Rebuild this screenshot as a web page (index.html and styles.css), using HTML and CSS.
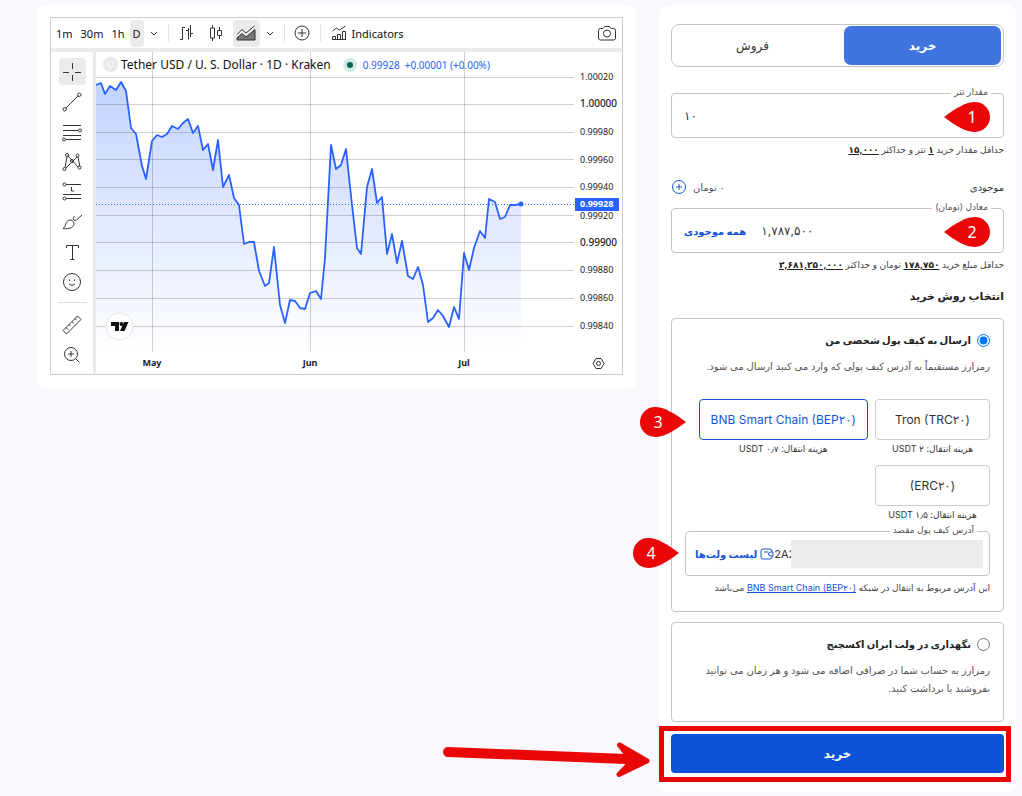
FILE: index.html
```html
<!DOCTYPE html>
<html lang="fa">
<head>
    <meta charset="UTF-8">
    <meta name="viewport" content="width=device-width, initial-scale=1">
    <title>خرید تتر</title>
    <link rel="stylesheet" href="styles.css">
</head>
<body>
    <main class="page">
        <section class="chart-card" lang="en">
            <div class="widget">
                <div class="toolbar">
                    <button class="interval" type="button">1m</button>
                    <button class="interval" type="button">30m</button>
                    <button class="interval" type="button">1h</button>
                    <button class="interval active" type="button">D</button>
                    <button class="arrow" type="button" aria-label="Intervals"><svg width="8" height="5" viewBox="0 0 8 5"><path d="M1 1l3 3 3-3"/></svg></button>
                    <span class="divider"></span>
                    <button class="tool-top" type="button" aria-label="Bars"><svg width="14" height="16" viewBox="0 0 14 16"><path d="M1 14.500h2.500v-12H6M9.500 3v11.500M9.500 5.500H7M11.500 0v12M11.500 8.500H14"/></svg></button>
                    <button class="tool-top" type="button" aria-label="Candles"><svg width="14" height="16" viewBox="0 0 14 16"><path d="M1.500 3h4v10h-4zM3.500 0v3M3.500 13v3M8.500 5.500h4v5h-4zM10.500 2v3.500M10.500 10.500v3.500"/></svg></button>
                    <button class="tool-top active" type="button" aria-label="Area"><svg width="20" height="16" viewBox="0 0 20 16"><path d="M1 9.500l5-5 4 3.500L18.500 1"/><path class="solid" d="M1 15v-2l5-4.500 4 3.500 9-7.500V15z"/></svg></button>
                    <button class="arrow" type="button" aria-label="Chart types"><svg width="8" height="5" viewBox="0 0 8 5"><path d="M1 1l3 3 3-3"/></svg></button>
                    <span class="divider"></span>
                    <button class="tool-top compare" type="button" aria-label="Compare"><svg width="16" height="16" viewBox="0 0 16 16"><circle cx="8" cy="8" r="7"/><path d="M8 4v8M4 8h8"/></svg></button>
                    <span class="divider"></span>
                    <button class="indicators" type="button"><svg width="16" height="16" viewBox="0 0 16 16"><path d="M1.500 6l4-3 3 2 6-4M1.500 14.500v-3h3v3zM6.500 14.500v-5h3v5zM11.500 14.500v-8h3v8zM1 14.500h14"/></svg>Indicators</button>
                    <button class="camera" type="button" aria-label="Snapshot"><svg width="18" height="15" viewBox="0 0 18 15"><path d="M2.500 2.500H5l1.500-2h5l1.500 2h2.500q2 0 2 2v7.500q0 2-2 2h-13q-2 0-2-2V4.500q0-2 2-2z"/><circle cx="9" cy="7.500" r="3.500"/></svg></button>
                </div>
                <div class="widget-body">
                    <div class="side-tools">
                        <button class="active" type="button" aria-label="Cross"><svg width="20" height="20" viewBox="0 0 20 20"><path d="M10.500 1v6M10.500 13v6M1 10.500h6M13 10.500h6"/></svg></button>
                        <button type="button" aria-label="Trend line"><svg width="20" height="20" viewBox="0 0 20 20"><path d="M4 16L16 4"/><circle cx="2.700" cy="17.300" r="1.700"/><circle cx="17.300" cy="2.700" r="1.700"/></svg></button>
                        <button type="button" aria-label="Fib retracement"><svg width="20" height="20" viewBox="0 0 20 20"><path d="M1 3.500h18M1 8.500h15M1 13.500h18M4 17.500h15"/><circle cx="18" cy="8.500" r="1.500"/><circle cx="2" cy="17.500" r="1.500"/></svg></button>
                        <button type="button" aria-label="Pattern"><svg width="20" height="20" viewBox="0 0 20 20"><path d="M5 4.500L3 15.500M4 16L15 5M16 5l2 10M6 4l10 11"/><circle cx="5" cy="3" r="1.500"/><circle cx="15.500" cy="3.500" r="1.500"/><circle cx="2.500" cy="17" r="1.500"/><circle cx="17.500" cy="15.500" r="1.500"/><circle cx="10" cy="9" r="1.500"/></svg></button>
                        <button type="button" aria-label="Long position"><svg width="20" height="20" viewBox="0 0 20 20"><path d="M4 2.500h15M9.500 5v4H12M1 12.500h18M4 16.500h15"/><circle cx="2.500" cy="2.500" r="1.500"/><circle cx="2.500" cy="16.500" r="1.500"/></svg></button>
                        <button type="button" aria-label="Brush"><svg width="20" height="20" viewBox="0 0 20 20"><path d="M1 16.500c3-1 2-8 7-8.500 3 0 5 3 3.500 5.500-2 3.500-7 3.500-10.500 3zM11.500 8c-.5-2 0-3 1-4M12 8.500l2.500-.5L20 3"/></svg></button>
                        <button type="button" aria-label="Text"><svg width="20" height="20" viewBox="0 0 20 20"><path d="M4.500 6V3.500h12V6M10.500 3.500v14M8.500 17.500h4"/></svg></button>
                        <button type="button" aria-label="Emoji"><svg width="20" height="20" viewBox="0 0 20 20"><circle cx="10" cy="10" r="8.500"/><path d="M7.500 7.500v1.500M12.500 7.500v1.500M7 12q3 3 6 0"/></svg></button>
                        <span class="rule"></span>
                        <button type="button" aria-label="Measure"><svg width="20" height="20" viewBox="0 0 20 20"><path d="M1 15.500L15.500 1 19 4.500 4.500 19zM4 12.500l2 2M7 9.500l1.500 1.500M10 6.500l2 2M13 3.500L14.500 5"/></svg></button>
                        <button type="button" aria-label="Zoom in"><svg width="20" height="20" viewBox="0 0 20 20"><circle cx="9" cy="9" r="6.500"/><path d="M9 6v6M6 9h6M14 14l3.500 3.500"/></svg></button>
                    </div>
                    <div class="plot">
                        <div class="legend">
                            <span class="coin">U</span>
                            <span class="symbol">Tether USD / U. S. Dollar · 1D · Kraken</span>
                            <span class="status"></span>
                            <span class="quote">0.99928</span>
                            <span class="quote">+0.00001 (+0.00%)</span>
                        </div>
                        <svg class="graph" viewBox="0 0 526 322" role="img" aria-label="Tether USD chart">
                            <defs>
                                <linearGradient id="fade" x1="0" y1="30" x2="0" y2="300" gradientUnits="userSpaceOnUse">
                                    <stop offset="0" stop-color="#2962ff" stop-opacity=".28"/>
                                    <stop offset="1" stop-color="#2962ff" stop-opacity="0"/>
                                </linearGradient>
                            </defs>
                            <path class="area" d="M0 33L5 31 9 42 14 34 20 38 25 30 30 39 35 76 40 82 46 114 50 127 56 89 61 83 66 85 71 82 76 74 82 77 87 71 92 67 97 81 102 74 107 98 112 92 117 118 122 88 127 135 133 123 138 146 143 153 148 192 153 190 158 190 163 219 169 234 173 231 178 195 184 253 189 271 194 248 199 249 204 256 209 257 214 241 220 239 225 247 229 206 235 93 240 117 245 113 250 97 256 153 261 196 265 202 271 135 276 117 281 151 286 145 291 202 296 182 301 211 306 189 312 224 317 227 322 215 327 233 332 270 337 266 342 258 347 264 353 275 358 255 363 267 368 201 373 218 378 196 384 179 389 186 393 147 399 150 404 167 409 165 414 153 419 153 425 152V300H0z"/>
                            <path class="grid" d="M0 25.500h478M0 52.500h478M0 80.500h478M0 107.500h478M0 135.500h478M0 163.500h478M0 190.500h478M0 218.500h478M0 246.500h478M0 274.500h478M56.500 0v300M214.500 0v300M368.500 0v300"/>
                            <path class="last" d="M0 152.500h478"/>
                            <path class="line" d="M0 33L5 31 9 42 14 34 20 38 25 30 30 39 35 76 40 82 46 114 50 127 56 89 61 83 66 85 71 82 76 74 82 77 87 71 92 67 97 81 102 74 107 98 112 92 117 118 122 88 127 135 133 123 138 146 143 153 148 192 153 190 158 190 163 219 169 234 173 231 178 195 184 253 189 271 194 248 199 249 204 256 209 257 214 241 220 239 225 247 229 206 235 93 240 117 245 113 250 97 256 153 261 196 265 202 271 135 276 117 281 151 286 145 291 202 296 182 301 211 306 189 312 224 317 227 322 215 327 233 332 270 337 266 342 258 347 264 353 275 358 255 363 267 368 201 373 218 378 196 384 179 389 186 393 147 399 150 404 167 409 165 414 153 419 153 425 152"/>
                            <circle class="dot" cx="425" cy="152" r="2.500"/>
                            <g class="axis">
                                <text x="484" y="28">1.00020</text>
                                <text class="strong" x="484" y="55">1.00000</text>
                                <text x="484" y="83">0.99980</text>
                                <text x="484" y="111">0.99960</text>
                                <text x="484" y="138">0.99940</text>
                                <text x="484" y="167">0.99920</text>
                                <text class="strong" x="484" y="194">0.99900</text>
                                <text x="484" y="221">0.99880</text>
                                <text x="484" y="249">0.99860</text>
                                <text x="484" y="277">0.99840</text>
                                <rect x="479" y="146" width="44" height="13"/>
                                <text class="now" x="484" y="155">0.99928</text>
                                <text class="month" x="56" y="314">May</text>
                                <text class="month" x="214" y="314">Jun</text>
                                <text class="month" x="368" y="314">Jul</text>
                            </g>
                            <g class="gear"><path d="M497 311.500l3-5h5l3 5-3 5h-5z"/><circle cx="502.500" cy="311.500" r="2"/></g>
                            <circle class="logo-back" cx="23.500" cy="274.500" r="13.500"/>
                            <path class="logo" d="M15 270h8v9h-4v-5h-4zM28 270h4.500l-4 9H24z"/>
                            <circle class="logo" cx="25.500" cy="272" r="2"/>
                        </svg>
                    </div>
                </div>
            </div>
        </section>

        <form class="trade" dir="rtl">
            <div class="tabs">
                <button class="tab selected" type="button">خرید</button>
                <button class="tab" type="button">فروش</button>
            </div>

            <div class="field">
                <label for="amount">مقدار تتر</label>
                <input type="text" id="amount" value="۱۰">
                <svg class="pin pin-inside" width="46" height="30" viewBox="0 0 46 30"><path d="M0 15C12 6 22 0 31 0a15 15 0 0 1 0 30C22 30 12 24 0 15z"/><text x="28" y="21">1</text></svg>
            </div>
            <p class="hint">حداقل مقدار خرید <b>۱</b> تتر و حداکثر <b>۱۵,۰۰۰</b></p>

            <div class="balance">
                <span>موجودی</span>
                <span class="cash">۰ تومان</span>
                <button type="button" aria-label="افزایش موجودی"><svg width="16" height="16" viewBox="0 0 16 16"><circle cx="8" cy="8" r="6.500"/><path d="M8 5v6M5 8h6"/></svg></button>
            </div>

            <div class="field">
                <label for="total">معادل (تومان)</label>
                <input type="text" id="total" value="۱,۷۸۷,۵۰۰">
                <button class="link-button" type="button">همه موجودی</button>
                <svg class="pin pin-inside" width="46" height="30" viewBox="0 0 46 30"><path d="M0 15C12 6 22 0 31 0a15 15 0 0 1 0 30C22 30 12 24 0 15z"/><text x="28" y="21">2</text></svg>
            </div>
            <p class="hint">حداقل مبلغ خرید <b>۱۷۸,۷۵۰</b> تومان و حداکثر <b>۲,۶۸۱,۲۵۰,۰۰۰</b></p>

            <h2>انتخاب روش خرید</h2>

            <div class="method">
                <div class="choice">
                    <input type="radio" id="own" name="method" checked>
                    <label for="own">ارسال به کیف پول شخصی من</label>
                </div>
                <p class="note">رمزارز مستقیماً به آدرس کیف پولی که وارد می کنید ارسال می شود.</p>
                <div class="networks">
                    <div class="network">
                        <button type="button" dir="ltr">Tron (TRC۲۰)</button>
                        <span>هزینه انتقال: ۲ USDT</span>
                    </div>
                    <div class="network picked">
                        <button type="button" dir="ltr">BNB Smart Chain (BEP۲۰)</button>
                        <span>هزینه انتقال: ۰٫۷ USDT</span>
                        <svg class="pin pin-network" width="46" height="30" viewBox="0 0 46 30"><path d="M46 15C34 6 24 0 15 0a15 15 0 0 0 0 30c9 0 19-6 31-15z"/><text x="18" y="21">3</text></svg>
                    </div>
                    <div class="network">
                        <button type="button" dir="ltr">(ERC۲۰)</button>
                        <span>هزینه انتقال: ۱٫۵ USDT</span>
                    </div>
                </div>
                <div class="field wallet">
                    <label for="address">آدرس کیف پول مقصد</label>
                    <span class="mask"></span>
                    <input type="text" id="address" value="2A2">
                    <button class="link-button" type="button"><svg width="14" height="12" viewBox="0 0 14 12"><path d="M3 1h7q2 0 2 2v1M12 8v1q0 2-2 2H3q-2 0-2-2V3q0-2 2-2M4 4h4M13 4h-2.500a2 2 0 0 0 0 4H13z"/></svg>لیست ولت‌ها</button>
                    <svg class="pin pin-wallet" width="46" height="30" viewBox="0 0 46 30"><path d="M46 15C34 6 24 0 15 0a15 15 0 0 0 0 30c9 0 19-6 31-15z"/><text x="18" y="21">4</text></svg>
                </div>
                <p class="hint">این آدرس مربوط به انتقال در شبکه <a href="#" dir="ltr">BNB Smart Chain (BEP۲۰)</a> می‌باشد</p>
            </div>

            <div class="method keep">
                <div class="choice">
                    <input type="radio" id="keep" name="method">
                    <label for="keep">نگهداری در ولت ایران اکسچنج</label>
                </div>
                <p class="note">رمزارز به حساب شما در صرافی اضافه می شود و هر زمان می توانید بفروشید یا برداشت کنید.</p>
            </div>

            <div class="submit">
                <button type="submit">خرید</button>
                <span class="frame"></span>
                <svg class="pointer" width="210" height="40" viewBox="0 0 210 40"><path class="shaft" d="M6 12L184 19"/><path class="head" d="M177.500 5L205 21 177 34.500 190 21z"/></svg>
            </div>
        </form>
    </main>
</body>
</html>
```
FILE: styles.css
```css
* { padding: 0; margin: 0; box-sizing: border-box; }
body {
    background: #faf8fc;
    font-family: "Inter", "DejaVu Sans", sans-serif;
    font-size: 11px;
    color: #333;
}
button, input {
    font: inherit;
    color: inherit;
    background: none;
    border: none;
}
button { cursor: pointer; }
svg {
    fill: none;
    stroke: #333;
    stroke-width: 1;
    display: block;
}
.page {
    display: flex;
    align-items: flex-start;
    gap: 23px;
    padding: 5px 6px 4px 37px;
}

/* chart */
.chart-card {
    flex: 1;
    min-width: 0;
    background: #fff;
    border-radius: 8px;
    padding: 12px 13px 14px;
    font-family: "Noto Sans", sans-serif;
}
.widget {
    border: 1px solid #ccc;
}
.toolbar {
    display: flex;
    align-items: center;
    height: 34px;
    padding: 0 6px 0 2px;
    border-bottom: 4px solid #ebebeb;
    color: #111;
}
.toolbar button {
    height: 27px;
    display: flex;
    align-items: center;
    justify-content: center;
    border-radius: 4px;
}
.toolbar .active, .side-tools .active {
    background: #ebebeb;
}
.toolbar .interval {
    padding: 0 3px;
    margin-right: 2px;
}
.toolbar .interval.active {
    margin-right: 0;
}
.toolbar .arrow {
    width: 20px;
}
.toolbar .divider {
    width: 1px;
    height: 18px;
    margin: 0 4px;
    background: #e4e4e4;
}
.toolbar .tool-top {
    width: 27px;
    margin-right: 3px;
}
.toolbar .tool-top.active, .toolbar .compare {
    margin-right: 0;
}
.tool-top .solid {
    fill: #777;
}
.toolbar .indicators {
    gap: 5px;
    padding: 0 6px;
}
.toolbar .camera {
    margin-left: auto;
}
.widget-body {
    display: flex;
}
.side-tools {
    display: flex;
    flex-direction: column;
    align-items: center;
    gap: 3px;
    width: 45px;
    padding: 6px 0;
    border-right: 3px solid #ebebeb;
}
.side-tools button {
    width: 27px;
    height: 27px;
    display: grid;
    place-items: center;
    border-radius: 4px;
}
.side-tools .rule {
    width: 29px;
    height: 1px;
    margin: 4px 0 5px;
    background: #ddd;
}
.plot {
    flex: 1;
    min-width: 0;
    position: relative;
}
.graph {
    width: 100%;
}
.legend {
    position: absolute;
    top: 4px;
    left: 7px;
    display: flex;
    align-items: center;
    white-space: nowrap;
}
.coin {
    width: 15px;
    height: 15px;
    margin-right: 3px;
    border-radius: 50%;
    background: #e8e8e8;
    color: #fff;
    font-size: 9px;
    line-height: 15px;
    text-align: center;
}
.symbol {
    font-size: 12px;
    color: #111;
}
.status {
    width: 14px;
    height: 14px;
    margin: 0 6px 0 12px;
    border-radius: 50%;
    background: #056656;
    border: 4px solid #d3ebe6;
}
.quote {
    margin-right: 5px;
    font-size: 10px;
    color: #2962ff;
}
.graph .area { fill: url(#fade); stroke: none; }
.graph .grid { stroke: #000; stroke-opacity: .18; }
.graph .last { stroke: #2962ff; stroke-dasharray: 1 2; }
.graph .line { stroke: #2962ff; stroke-width: 1.8; stroke-linejoin: round; }
.graph .dot { fill: #2962ff; stroke: none; }
.axis { stroke: none; fill: #222; font-size: 9px; }
.axis rect { fill: #2962ff; }
.axis .strong { font-size: 10px; font-weight: 500; }
.axis .now { fill: #fff; font-weight: bold; }
.axis .month { text-anchor: middle; font-weight: bold; }
.logo-back { fill: #fff; stroke: #e4e4e4; }
.logo { fill: #111; stroke: none; }

/* trade form */
.trade {
    width: 357px;
    background: #fff;
    border-radius: 8px;
    padding: 19px 12px;
}
.tabs {
    display: flex;
    justify-content: space-between;
    padding: 1px 2px;
    height: 43px;
    margin-bottom: 26px;
    border: 1px solid #c4c4d0;
    border-radius: 8px;
}
.tab {
    width: 48%;
    font-size: 12px;
}
.tab.selected {
    background: #4075e0;
    color: #fff;
    font-weight: bold;
    border-radius: 7px;
}
.field {
    position: relative;
    display: flex;
    align-items: center;
    height: 45px;
    padding: 0 12px;
    border: 1px solid #c4c4d0;
    border-radius: 4px;
}
.field label {
    position: absolute;
    top: -9px;
    right: 12px;
    padding: 0 3px;
    line-height: 14px;
    font-size: 9px;
    color: #555;
    background: #fff;
}
.field input {
    flex: 1;
    min-width: 0;
    direction: ltr;
    font-size: 12px;
    outline: none;
}
.link-button {
    display: flex;
    align-items: center;
    gap: 3px;
    color: #1554d8;
    font-size: 10px;
    font-weight: bold;
    white-space: nowrap;
}
.link-button svg {
    stroke: #1554d8;
}
.field #total {
    padding-left: 15px;
}
.hint {
    line-height: 24px;
    font-size: 9px;
    color: #444;
    white-space: nowrap;
}
.hint b {
    color: #222;
    text-decoration: underline;
}
.hint a {
    color: #1554d8;
    unicode-bidi: isolate;
}
.balance {
    display: flex;
    align-items: center;
    height: 24px;
    margin: 13px 0 9px;
    font-size: 10px;
}
.cash {
    margin-right: auto;
    color: #555;
}
.balance button {
    margin-right: 6px;
}
.balance svg {
    stroke: #1554d8;
}
.trade h2 {
    margin: 7px 0 10px;
    font-size: 11px;
    line-height: 24px;
    color: #222;
}
.method {
    min-height: 100px;
    padding: 9px 13px 11px;
    margin-bottom: 10px;
    border: 1px solid #c4c4d0;
    border-radius: 4px;
}
.choice {
    display: flex;
    align-items: center;
    gap: 6px;
    height: 24px;
    font-size: 10px;
    font-weight: bold;
    color: #222;
}
.choice input {
    width: 13px;
    height: 13px;
}
.note {
    margin-top: 5px;
    font-size: 10px;
    line-height: 18px;
    color: #555;
}
.networks {
    display: flex;
    flex-wrap: wrap;
    gap: 7px;
    margin: 24px 0 7px;
}
.network {
    position: relative;
    display: flex;
    flex-direction: column;
    min-width: 115px;
    text-align: center;
    font-size: 9px;
    line-height: 18px;
}
.network button {
    height: 41px;
    padding: 0 11px;
    border: 1px solid #ccc;
    border-radius: 4px;
    font-size: 12px;
}
.network.picked button {
    border-color: #1554d8;
    color: #1554d8;
}
.wallet {
    padding: 0 6px 0 9px;
}
.mask {
    flex: 1;
    height: 28px;
    background: #ebebec;
}
.field #address {
    flex: none;
    width: 17px;
    font-size: 11px;
}
.keep {
    margin-bottom: 12px;
}
.submit {
    position: relative;
}
.submit button {
    display: block;
    width: 100%;
    height: 39px;
    background: #0d52d9;
    color: #fff;
    font-size: 12px;
    font-weight: bold;
    border-radius: 4px;
}

/* guide marks */
.pin {
    position: absolute;
    fill: #ea0707;
    stroke: none;
}
.pin text {
    fill: #fff;
    font: 16px "Noto Sans", sans-serif;
    text-anchor: middle;
}
.pin-inside { right: 13px; top: 8px; }
.pin-network { left: -59px; top: 8px; }
.pin-wallet { left: -53px; top: 6px; }
.frame {
    position: absolute;
    inset: -8px -7px -9px -12px;
    border: 5px solid #ea0707;
    pointer-events: none;
}
.pointer {
    position: absolute;
    right: 100%;
    top: 6px;
    margin-right: 19px;
    stroke: #ea0707;
    stroke-linejoin: round;
    stroke-linecap: round;
}
.pointer .shaft { stroke-width: 10; }
.pointer .head { stroke-width: 5; fill: #ea0707; }
```
